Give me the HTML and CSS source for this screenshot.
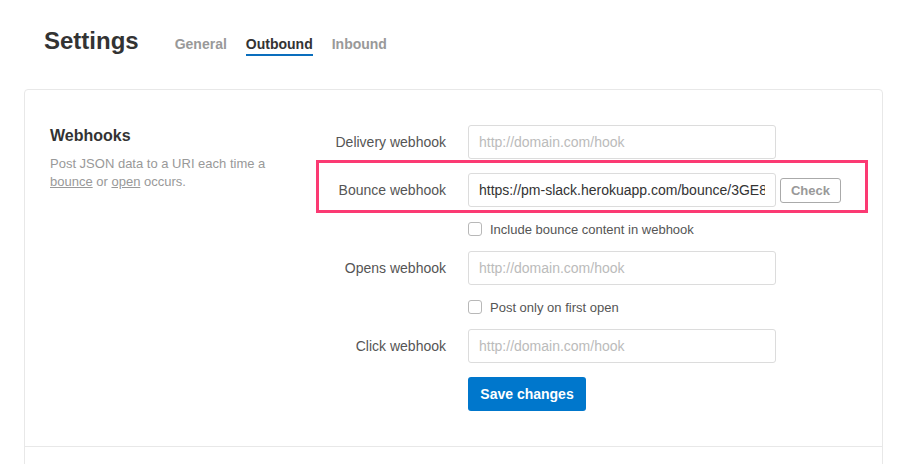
FILE: index.html
```html
<!DOCTYPE html>
<html>
<head>
<meta charset="utf-8">
<link rel="stylesheet" href="styles.css">
</head>
<body>
<div class="page">
  <header class="header">
    <h1 class="title">Settings</h1>
    <nav class="tabs">
      <a class="tab">General</a>
      <a class="tab active">Outbound</a>
      <a class="tab">Inbound</a>
    </nav>
  </header>
  <div class="card">
    <section class="section">
      <div class="intro">
        <h2 class="intro-title">Webhooks</h2>
        <p class="intro-text">Post JSON data to a URI each time a <a class="link">bounce</a> or <a class="link">open</a> occurs.</p>
      </div>
      <form class="form">
        <div class="row">
          <label class="label">Delivery webhook</label>
          <input class="input" type="text" placeholder="http://domain.com/hook">
        </div>
        <div class="row highlighted">
          <label class="label">Bounce webhook</label>
          <input class="input" type="text" value="https://pm-slack.herokuapp.com/bounce/3GE8x2KpQ">
          <button class="check" type="button">Check</button>
        </div>
        <label class="check-row"><input class="box" type="checkbox"><span>Include bounce content in webhook</span></label>
        <div class="row">
          <label class="label">Opens webhook</label>
          <input class="input" type="text" placeholder="http://domain.com/hook">
        </div>
        <label class="check-row"><input class="box" type="checkbox"><span>Post only on first open</span></label>
        <div class="row">
          <label class="label">Click webhook</label>
          <input class="input" type="text" placeholder="http://domain.com/hook">
        </div>
        <div class="actions">
          <button class="save" type="button">Save changes</button>
        </div>
      </form>
    </section>
    <section class="section next"></section>
  </div>
</div>
</body>
</html>
```
FILE: styles.css
```css
* { box-sizing: border-box; }
html, body { margin: 0; padding: 0; background: #fff; }
body {
  font-family: "Liberation Sans", Arial, sans-serif;
  color: #333;
  overflow: hidden;
}
.page { padding: 0 30px 0 24px; }
.header {
  display: flex;
  align-items: baseline;
  padding: 27px 0 0 20px;
  height: 89px;
}
.title {
  margin: 0;
  font-size: 24px;
  line-height: 28px;
  font-weight: bold;
  color: #333;
}
.tabs { display: flex; gap: 19px; margin-left: 36px; }
.tab {
  font-size: 14px;
  line-height: 16px;
  font-weight: bold;
  color: #999;
  padding-bottom: 2px;
  border-bottom: 2px solid transparent;
}
.tab.active { color: #333; border-bottom-color: #0a6ebd; }
.card {
  border: 1px solid #e8e8e8;
  border-radius: 4px;
  background: #fff;
}
.section {
  display: flex;
  padding: 35px 25px 35px 25px;
  border-bottom: 1px solid #e8e8e8;
}
.section.next { height: 120px; border-bottom: 0; }
.intro { width: 250px; flex: none; }
.intro-title {
  margin: 1px 0 9px;
  font-size: 16px;
  line-height: 20px;
  font-weight: bold;
  color: #333;
}
.intro-text {
  margin: 0;
  font-size: 13px;
  line-height: 18px;
  color: #999;
  width: 230px;
}
.link { color: #999; text-decoration: underline; }
.form { flex: 1; display: flex; flex-direction: column; }
.row {
  display: flex;
  align-items: center;
  height: 34px;
  margin-bottom: 14px;
}
.highlighted { position: relative; }
.highlighted::after {
  content: "";
  position: absolute;
  top: -13px;
  bottom: -6px;
  left: 16px;
  right: -11px;
  border: 3px solid #fb3a73;
  pointer-events: none;
}
.label {
  width: 146px;
  margin-right: 22px;
  text-align: right;
  font-size: 14px;
  color: #555;
}
.input {
  width: 308px;
  height: 34px;
  border: 1px solid #dcdcdc;
  border-radius: 3px;
  padding: 0 10px;
  font-family: "Liberation Sans", Arial, sans-serif;
  font-size: 14px;
  color: #333;
  background: #fff;
  outline: none;
}
.input::placeholder { color: #bbb; }
.check {
  margin-left: 4px;
  width: 61px;
  height: 25px;
  border: 1px solid #aaa;
  border-radius: 3px;
  background: #fff;
  font-family: "Liberation Sans", Arial, sans-serif;
  font-size: 13px;
  font-weight: bold;
  color: #999;
  padding: 0;
}
.check-row {
  display: flex;
  align-items: center;
  height: 16px;
  margin: 0 0 14px 168px;
  font-size: 13px;
  color: #555;
}
.box {
  appearance: none;
  -webkit-appearance: none;
  width: 14px;
  height: 14px;
  margin: 0 8px 0 0;
  border: 1px solid #b8b8b8;
  border-radius: 3px;
  background: #fff;
}
.actions { padding-left: 168px; }
.save {
  width: 118px;
  height: 34px;
  border: 0;
  border-radius: 3px;
  background: #0077cc;
  color: #fff;
  font-family: "Liberation Sans", Arial, sans-serif;
  font-size: 14px;
  font-weight: bold;
  padding: 0;
}
```
